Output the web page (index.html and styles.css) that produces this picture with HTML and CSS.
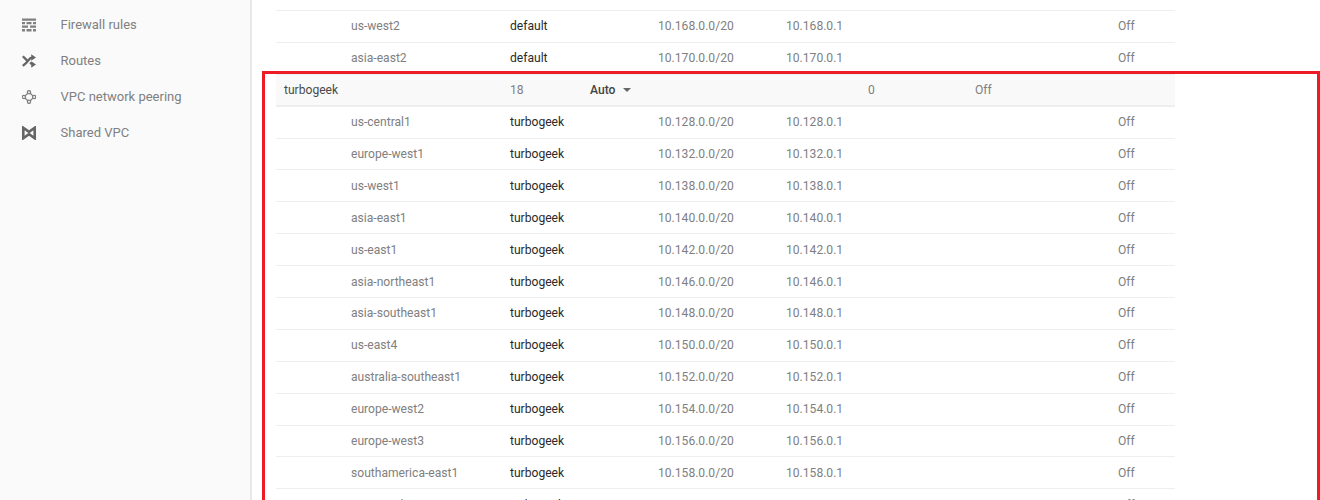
FILE: index.html
```html
<!DOCTYPE html>
<html lang="en">
<head>
<meta charset="utf-8">
<title>VPC networks</title>
<link rel="stylesheet" href="styles.css">
</head>
<body>
<div class="page">
  <nav class="side">
    <a class="nav-item">
      <svg class="ico" viewBox="0 0 14 14"><path d="M0 .5h14v2.300H0zM0 4h3v2.300H0zM4.500 4h5v2.300h-5zM11 4h3v2.300h-3zM0 7.500h6v2.300H0zM8 7.500h6v2.300H8zM0 11h3v2.500H0zM4.500 11h5v2.500h-5zM11 11h3v2.500h-3z" fill="#808080"/></svg>
      <span>Firewall rules</span>
    </a>
    <a class="nav-item">
      <svg class="ico" viewBox="0 0 14 14"><path d="M.8 2.200 5 6.400M.8 11.800 4.200 9 8 4.500 10 3.500M8 8.700l2 1.300" fill="none" stroke="#666" stroke-width="2.300"/><path d="M9.200 .3 14 3.500 9.200 6.700zM9.200 7.300 14 10.500 9.200 13.700z" fill="#666"/></svg>
      <span>Routes</span>
    </a>
    <a class="nav-item">
      <svg class="ico" viewBox="0 0 14 14"><g fill="none" stroke="#808080" stroke-width="1.300"><circle cx="7" cy="2.200" r="1.600"/><circle cx="7" cy="11.800" r="1.600"/><circle cx="1.900" cy="7" r="1.600"/><circle cx="12.100" cy="7" r="1.600"/><path d="M5.800 3.300 3.100 5.900M8.200 3.300l2.700 2.600M3.100 8.100l2.700 2.600M10.900 8.100l-2.700 2.600"/></g></svg>
      <span>VPC network peering</span>
    </a>
    <a class="nav-item">
      <svg class="ico" viewBox="0 0 14 14"><path d="M1.300 1.800v10.400L7 8.200l5.700 4V1.800L7 5.800z" fill="none" stroke="#666" stroke-width="2.600"/></svg>
      <span>Shared VPC</span>
    </a>
  </nav>
  <main class="main">
    <div class="table">
      <div class="row"><span class="region">us-west2</span><span class="net">default</span><span>10.168.0.0/20</span><span>10.168.0.1</span><span>Off</span></div>
      <div class="row"><span class="region">asia-east2</span><span class="net">default</span><span>10.170.0.0/20</span><span>10.170.0.1</span><span>Off</span></div>
      <div class="row group"><span class="gname">turbogeek</span><span>18</span><span class="gmode">Auto<i class="caret"></i></span><span>0</span><span>Off</span></div>
      <div class="row"><span class="region">us-central1</span><span class="net">turbogeek</span><span>10.128.0.0/20</span><span>10.128.0.1</span><span>Off</span></div>
      <div class="row"><span class="region">europe-west1</span><span class="net">turbogeek</span><span>10.132.0.0/20</span><span>10.132.0.1</span><span>Off</span></div>
      <div class="row"><span class="region">us-west1</span><span class="net">turbogeek</span><span>10.138.0.0/20</span><span>10.138.0.1</span><span>Off</span></div>
      <div class="row"><span class="region">asia-east1</span><span class="net">turbogeek</span><span>10.140.0.0/20</span><span>10.140.0.1</span><span>Off</span></div>
      <div class="row"><span class="region">us-east1</span><span class="net">turbogeek</span><span>10.142.0.0/20</span><span>10.142.0.1</span><span>Off</span></div>
      <div class="row"><span class="region">asia-northeast1</span><span class="net">turbogeek</span><span>10.146.0.0/20</span><span>10.146.0.1</span><span>Off</span></div>
      <div class="row"><span class="region">asia-southeast1</span><span class="net">turbogeek</span><span>10.148.0.0/20</span><span>10.148.0.1</span><span>Off</span></div>
      <div class="row"><span class="region">us-east4</span><span class="net">turbogeek</span><span>10.150.0.0/20</span><span>10.150.0.1</span><span>Off</span></div>
      <div class="row"><span class="region">australia-southeast1</span><span class="net">turbogeek</span><span>10.152.0.0/20</span><span>10.152.0.1</span><span>Off</span></div>
      <div class="row"><span class="region">europe-west2</span><span class="net">turbogeek</span><span>10.154.0.0/20</span><span>10.154.0.1</span><span>Off</span></div>
      <div class="row"><span class="region">europe-west3</span><span class="net">turbogeek</span><span>10.156.0.0/20</span><span>10.156.0.1</span><span>Off</span></div>
      <div class="row"><span class="region">southamerica-east1</span><span class="net">turbogeek</span><span>10.158.0.0/20</span><span>10.158.0.1</span><span>Off</span></div>
      <div class="row"><span class="region">asia-south1</span><span class="net">turbogeek</span><span>10.160.0.0/20</span><span>10.160.0.1</span><span>Off</span></div>
    </div>
    <div class="highlight"></div>
  </main>
</div>
</body>
</html>
```
FILE: styles.css
```css
* { box-sizing: border-box; }
html, body { margin: 0; height: 500px; overflow: hidden; background: #fff; }
body { font-family: Roboto, "Liberation Sans", sans-serif; font-size: 12.100px; color: #808080; }
.page { display: flex; height: 500px; overflow: hidden; }
.side { width: 252px; flex: none; background: #fafafa; border-right: 2px solid #e8e8e8; padding-top: 6.500px; }
.nav-item { display: flex; align-items: center; height: 36px; padding-left: 22px; gap: 24.500px; color: #808080; font-size: 13px; }
.ico { width: 14px; height: 14px; flex: none; }
.main { position: relative; flex: 1; padding: 10px 0 0 24px; min-width: 0; }
.table { width: 899px; border-top: 1px solid #eee; }
.row { display: grid; grid-template-columns: 234px 148px 128px 332px 56px; height: 31.900px; align-items: center; border-bottom: 1px solid #eee; }
.region { padding-left: 75px; }
.net { color: #2a2a2a; }
.group { grid-template-columns: 234px 80px 278px 107px 200px; background: #f9f9f9; border-bottom: 2px solid #eee; }
.gname { padding-left: 8px; color: #4a4a4a; }
.gmode { color: #424242; font-weight: 500; display: flex; align-items: center; }
.caret { width: 0; height: 0; margin-left: 8px; border: 4px solid transparent; border-top-color: #666; border-bottom: 0; }
.highlight { position: absolute; left: 10px; top: 71px; width: 1058px; height: 460px; border: 3px solid #ed1c24; pointer-events: none; }
```
